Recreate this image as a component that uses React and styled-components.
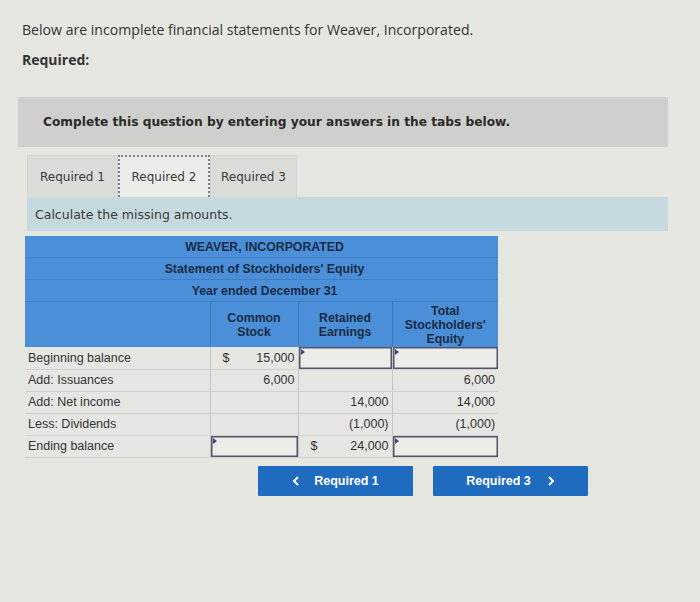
import React from 'react';
import styled, { createGlobalStyle } from 'styled-components';

const Global = createGlobalStyle`
  html, body { margin: 0; padding: 0; }
  body {
    background: #e7e7e2;
    width: 700px;
    height: 602px;
    overflow: hidden;
    font-family: "Open Sans", "Liberation Sans", sans-serif;
    color: #2b2b2b;
  }
`;

const Page = styled.div`
  padding: 20px 32px 0 18px;
`;

const Intro = styled.p`
  margin: 0 0 0 4px;
  font-size: 14.1px;
  line-height: 20px;
  color: #333;
`;

const RequiredLabel = styled.p`
  margin: 10px 0 0 4px;
  font-size: 14px;
  font-weight: 700;
  line-height: 20px;
  color: #333;
`;

const Notice = styled.div`
  margin-top: 27px;
  height: 50px;
  background: #cfcfcb;
  display: flex;
  align-items: center;
  padding-left: 25px;
  font-family: "DejaVu Sans", Verdana, sans-serif;
  font-weight: 700;
  font-size: 12.2px;
  color: #2a2a2a;
`;

const Body = styled.div`
  margin-left: 9px;
`;

const TabRow = styled.div`
  display: flex;
  margin-top: 8px;
`;

const Tab = styled.div`
  height: 42px;
  display: flex;
  align-items: center;
  justify-content: center;
  width: ${p => p.w}px;
  box-sizing: border-box;
  font-family: "DejaVu Sans", Verdana, sans-serif;
  font-size: 12px;
  color: #3a3a3a;
  background: ${p => (p.active ? '#ecece8' : '#dcdcd8')};
  border: ${p => (p.active ? '2px dotted #7a7a96' : '1px solid #d2d2ce')};
  border-bottom: none;
`;

const InfoBar = styled.div`
  height: 34px;
  background: #c6d9df;
  display: flex;
  align-items: center;
  padding-left: 8px;
  font-family: "DejaVu Sans", Verdana, sans-serif;
  font-size: 12.5px;
  color: #3a3a3a;
`;

const Table = styled.table`
  margin: 5px 0 0 -2px;
  border-collapse: collapse;
  font-family: "Liberation Sans", Arial, sans-serif;
  font-size: 12.5px;
  color: #333;
  width: 473px;
  table-layout: fixed;
`;

const TitleCell = styled.th`
  background: #4a8fd8;
  color: #1b2b45;
  font-weight: 700;
  font-size: 12.3px;
  height: 21px;
  padding: 0 0 0 6px;
  text-align: center;
  border-bottom: 1px solid #3f80c4;
`;

const HeadCell = styled.th`
  background: #4a8fd8;
  color: #1b2b45;
  font-weight: 700;
  font-size: 12.3px;
  line-height: 14px;
  height: 45px;
  padding: 0 4px;
  text-align: center;
  vertical-align: middle;
  border-left: ${p => (p.first ? 'none' : '1px solid #3b78b8')};
`;

const Row = styled.tr`
  height: 22px;
`;

const Label = styled.td`
  background: #e6e6e2;
  padding: 0 0 0 3px;
  border-bottom: 1px solid #d0d0cc;
  white-space: nowrap;
`;

const Cell = styled.td`
  position: relative;
  background: ${p => (p.input ? '#ecece8' : '#e6e6e2')};
  padding: 0 3px 0 4px;
  text-align: right;
  border-left: 1px solid #c4c4c0;
  border-bottom: 1px solid #d0d0cc;
  box-shadow: ${p => (p.input ? 'inset 0 0 0 1.5px #55556e' : 'none')};
  white-space: nowrap;
`;

const Money = styled.div`
  display: flex;
  justify-content: space-between;
  padding-left: 8px;
`;

const Flag = styled.span`
  position: absolute;
  top: 2px;
  left: 2px;
  width: 0;
  height: 0;
  border-top: 3px solid transparent;
  border-bottom: 3px solid transparent;
  border-left: 4px solid #3a4a7a;
`;

const Nav = styled.div`
  display: flex;
  gap: 20px;
  margin: 8px 0 0 240px;
`;

const NavButton = styled.div`
  width: 155px;
  height: 30px;
  background: #1f6bbf;
  color: #fff;
  border-radius: 1px;
  display: flex;
  align-items: center;
  justify-content: center;
  gap: ${p => p.gap}px;
  font-family: "Liberation Sans", Arial, sans-serif;
  font-weight: 700;
  font-size: 12.5px;
`;

const Chevron = ({ dir }) => (
  <svg width="8" height="10" viewBox="0 0 8 10">
    <path
      d={dir === 'left' ? 'M6 1 L2 5 L6 9' : 'M2 1 L6 5 L2 9'}
      fill="none"
      stroke="#fff"
      strokeWidth="2"
    />
  </svg>
);

const rows = [
  { label: 'Beginning balance', cs: '15,000', csDollar: true, re: 'input', tot: 'input' },
  { label: 'Add: Issuances', cs: '6,000', re: '', tot: '6,000' },
  { label: 'Add: Net income', cs: '', re: '14,000', tot: '14,000' },
  { label: 'Less: Dividends', cs: '', re: '(1,000)', tot: '(1,000)' },
  { label: 'Ending balance', cs: 'input', re: '24,000', reDollar: true, tot: 'input' },
];

const Value = ({ v, dollar }) =>
  dollar ? (
    <Money>
      <span>$</span>
      <span>{v}</span>
    </Money>
  ) : (
    v
  );

export default function App() {
  return (
    <>
      <Global />
      <Page>
        <Intro>Below are incomplete financial statements for Weaver, Incorporated.</Intro>
        <RequiredLabel>Required:</RequiredLabel>
        <Notice>Complete this question by entering your answers in the tabs below.</Notice>
        <Body>
          <TabRow>
            <Tab w={91}>Required 1</Tab>
            <Tab w={92} active>Required 2</Tab>
            <Tab w={87}>Required 3</Tab>
          </TabRow>
          <InfoBar>Calculate the missing amounts.</InfoBar>
          <Table>
            <colgroup>
              <col style={{ width: 185 }} />
              <col style={{ width: 88 }} />
              <col style={{ width: 94 }} />
              <col style={{ width: 106 }} />
            </colgroup>
            <thead>
              <tr><TitleCell colSpan={4}>WEAVER, INCORPORATED</TitleCell></tr>
              <tr><TitleCell colSpan={4}>Statement of Stockholders' Equity</TitleCell></tr>
              <tr><TitleCell colSpan={4}>Year ended December 31</TitleCell></tr>
              <tr>
                <HeadCell first />
                <HeadCell>Common<br />Stock</HeadCell>
                <HeadCell>Retained<br />Earnings</HeadCell>
                <HeadCell>Total<br />Stockholders'<br />Equity</HeadCell>
              </tr>
            </thead>
            <tbody>
              {rows.map(r => (
                <Row key={r.label}>
                  <Label>{r.label}</Label>
                  {[['cs', r.csDollar], ['re', r.reDollar], ['tot', false]].map(([k, d]) => {
                    const v = r[k];
                    return v === 'input' ? (
                      <Cell key={k} input><Flag /></Cell>
                    ) : (
                      <Cell key={k}><Value v={v} dollar={d} /></Cell>
                    );
                  })}
                </Row>
              ))}
            </tbody>
          </Table>
        </Body>
        <Nav>
          <NavButton gap={14}><Chevron dir="left" />Required 1</NavButton>
          <NavButton gap={16}>Required 3<Chevron dir="right" /></NavButton>
        </Nav>
      </Page>
    </>
  );
}
